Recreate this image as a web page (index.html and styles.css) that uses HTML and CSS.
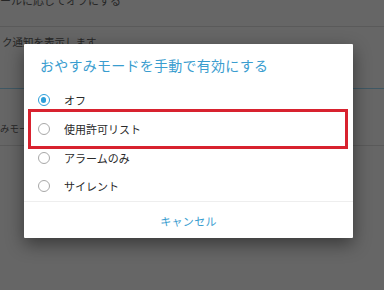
FILE: index.html
```html
<!DOCTYPE html>
<html lang="ja">
<head>
    <meta charset="UTF-8">
    <meta name="viewport" content="width=device-width, initial-scale=1.0">
    <title>おやすみモード</title>
    <link rel="stylesheet" href="styles.css">
</head>
<body>
    <div class="settings">
        <div class="row row-first"><span class="row-text">ールに応じてオフにする</span></div>
        <div class="row row-second"><span class="row-text">ク通知を表示します</span></div>
        <div class="row row-third"><span class="row-text">みモード</span></div>
    </div>

    <div class="dialog">
        <h2 class="dialog-title">おやすみモードを手動で有効にする</h2>
        <ul class="options">
            <li class="option"><span class="radio checked"></span>オフ</li>
            <li class="option"><span class="radio"></span>使用許可リスト</li>
            <li class="option"><span class="radio"></span>アラームのみ</li>
            <li class="option"><span class="radio"></span>サイレント</li>
        </ul>
        <div class="dialog-footer"><span class="cancel">キャンセル</span></div>
        <div class="highlight"></div>
    </div>
</body>
</html>
```

FILE: styles.css
```css
body { margin: 0; width: 384px; height: 290px; overflow: hidden; background: #666666; font-family: "Noto Sans CJK JP", "Noto Sans", sans-serif; position: relative; }

.settings { display: flex; flex-direction: column; }
.row { border-bottom: 1px solid #5a5a5a; color: #262626; font-size: 11px; line-height: 16px; overflow: hidden; white-space: nowrap; }
.row-first { height: 32px; margin-top: -6px; }
.row-first .row-text { display: block; margin-top: -2px; }
.row-second { height: 61px; border-bottom-color: #3f5864; }
.row-second .row-text { display: block; margin: 7px 0 0 2px; font-size: 10.5px; }
.row-third { height: 56px; }
.row-third .row-text { display: block; margin: 31px 0 0 0; font-size: 9.5px; }

.dialog { position: absolute; left: 24px; top: 44px; width: 329px; height: 194px; background: #fff; box-shadow: 0 6px 18px rgba(0,0,0,0.45); border-radius: 1px; }
.dialog-title { margin: 0; padding: 11px 0 0 16px; font-size: 14px; letter-spacing: 0.25px; line-height: 20px; font-weight: normal; color: #3a9dcf; }

.options { list-style: none; margin: 11px 0 0; padding: 0; }
.option { display: flex; align-items: center; height: 28.67px; font-size: 11px; color: #2a2a2a; }
.radio { box-sizing: border-box; width: 12px; height: 12px; margin: 0 14px 0 14px; border: 1.3px solid #a8a8a8; border-radius: 50%; position: relative; }
.radio.checked { border-color: #2d9fda; }
.radio.checked::after { content: ""; position: absolute; left: 2px; top: 2px; width: 5.4px; height: 5.4px; border-radius: 50%; background: #2d9fda; }

.dialog-footer { border-top: 1px solid #eeeeee; margin-top: 0.5px; height: 36px; box-sizing: border-box; padding-top: 5px; text-align: center; }
.cancel { font-size: 11px; line-height: 24px; color: #3a9dcf; letter-spacing: 0.3px; }

.highlight { position: absolute; left: 4px; top: 65px; width: 320px; height: 40px; box-sizing: border-box; border: 3px solid #d8222f; }
```
